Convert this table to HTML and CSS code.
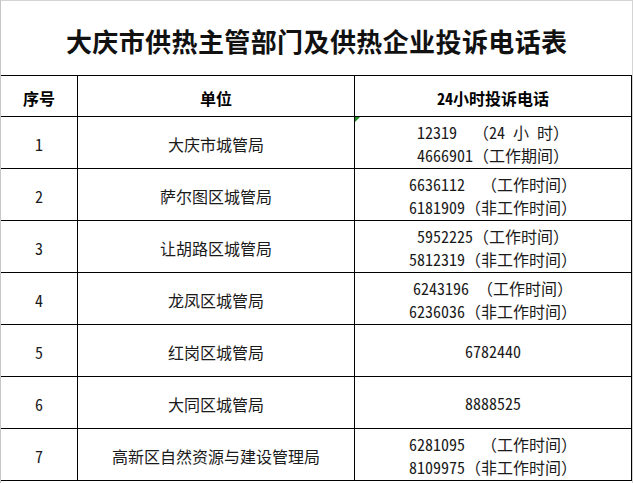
FILE: index.html
```html
<!DOCTYPE html>
<html lang="zh-CN">
<head>
<meta charset="utf-8">
<title>大庆市供热主管部门及供热企业投诉电话表</title>
<link rel="stylesheet" href="styles.css">
</head>
<body>
<div class="sheet">
  <div class="title">大庆市供热主管部门及供热企业投诉电话表</div>
  <div class="grid">
    <div class="cell head">序号</div>
    <div class="cell head">单位</div>
    <div class="cell head">24小时投诉电话</div>

    <div class="cell">1</div>
    <div class="cell">大庆市城管局</div>
    <div class="cell phone flagged"><span class="flag"></span><span class="ln">12319  （24 小 时）</span><span class="ln">4666901（工作期间）</span></div>

    <div class="cell">2</div>
    <div class="cell">萨尔图区城管局</div>
    <div class="cell phone"><span class="ln">6636112  （工作时间）</span><span class="ln">6181909（非工作时间）</span></div>

    <div class="cell">3</div>
    <div class="cell">让胡路区城管局</div>
    <div class="cell phone"><span class="ln">5952225（工作时间）</span><span class="ln">5812319（非工作时间）</span></div>

    <div class="cell">4</div>
    <div class="cell">龙凤区城管局</div>
    <div class="cell phone"><span class="ln">6243196 （工作时间）</span><span class="ln">6236036（非工作时间）</span></div>

    <div class="cell">5</div>
    <div class="cell">红岗区城管局</div>
    <div class="cell phone"><span class="ln">6782440</span></div>

    <div class="cell">6</div>
    <div class="cell">大同区城管局</div>
    <div class="cell phone"><span class="ln">8888525</span></div>

    <div class="cell">7</div>
    <div class="cell">高新区自然资源与建设管理局</div>
    <div class="cell phone"><span class="ln">6281095  （工作时间）</span><span class="ln">8109975（非工作时间）</span></div>
  </div>
</div>
</body>
</html>
```

FILE: styles.css
```css
html, body {
  margin: 0;
  padding: 0;
  background: #ffffff;
}

body {
  width: 633px;
  height: 483px;
  overflow: hidden;
  font-family: "Noto Sans Mono CJK SC", "Noto Sans CJK SC", sans-serif;
  color: #000000;
}

.sheet {
  width: 631px;
  height: 482px;
  border-top: 1px solid #d4d4d4;
  border-left: 1px solid #c6c6c6;
  border-right: 1px solid #d4d4d4;
  display: flex;
  flex-direction: column;
}

.title {
  height: 74px;
  box-sizing: border-box;
  padding-top: 5px;
  display: flex;
  align-items: center;
  justify-content: center;
  font-family: "Noto Sans CJK SC", sans-serif;
  font-size: 26px;
  font-weight: 700;
  letter-spacing: 0.4px;
  text-indent: 0.4px;
  color: #111;
}

.grid {
  width: 630px;
  display: grid;
  grid-template-columns: 76px 276px 276px;
  grid-template-rows: 40px repeat(7, 51px);
  gap: 1px;
  background: #000000;
  border-top: 1px solid #000000;
  border-bottom: 1px solid #000000;
  border-right: 1px solid #000000;
  box-sizing: content-box;
}

.cell {
  background: #ffffff;
  display: flex;
  flex-direction: column;
  align-items: center;
  justify-content: center;
  font-size: 16px;
  line-height: 20px;
  padding-top: 2px;
  box-sizing: border-box;
  white-space: pre;
  color: #1a1a1a;
}

.head {
  font-weight: 700;
  padding-top: 3px;
  color: #000;
}

.phone .ln {
  display: block;
  line-height: 23px;
}

.flagged {
  position: relative;
}

.flag {
  position: absolute;
  left: 0;
  top: 0;
  width: 0;
  height: 0;
  border-top: 5px solid #1e8c1e;
  border-right: 5px solid transparent;
}
```
